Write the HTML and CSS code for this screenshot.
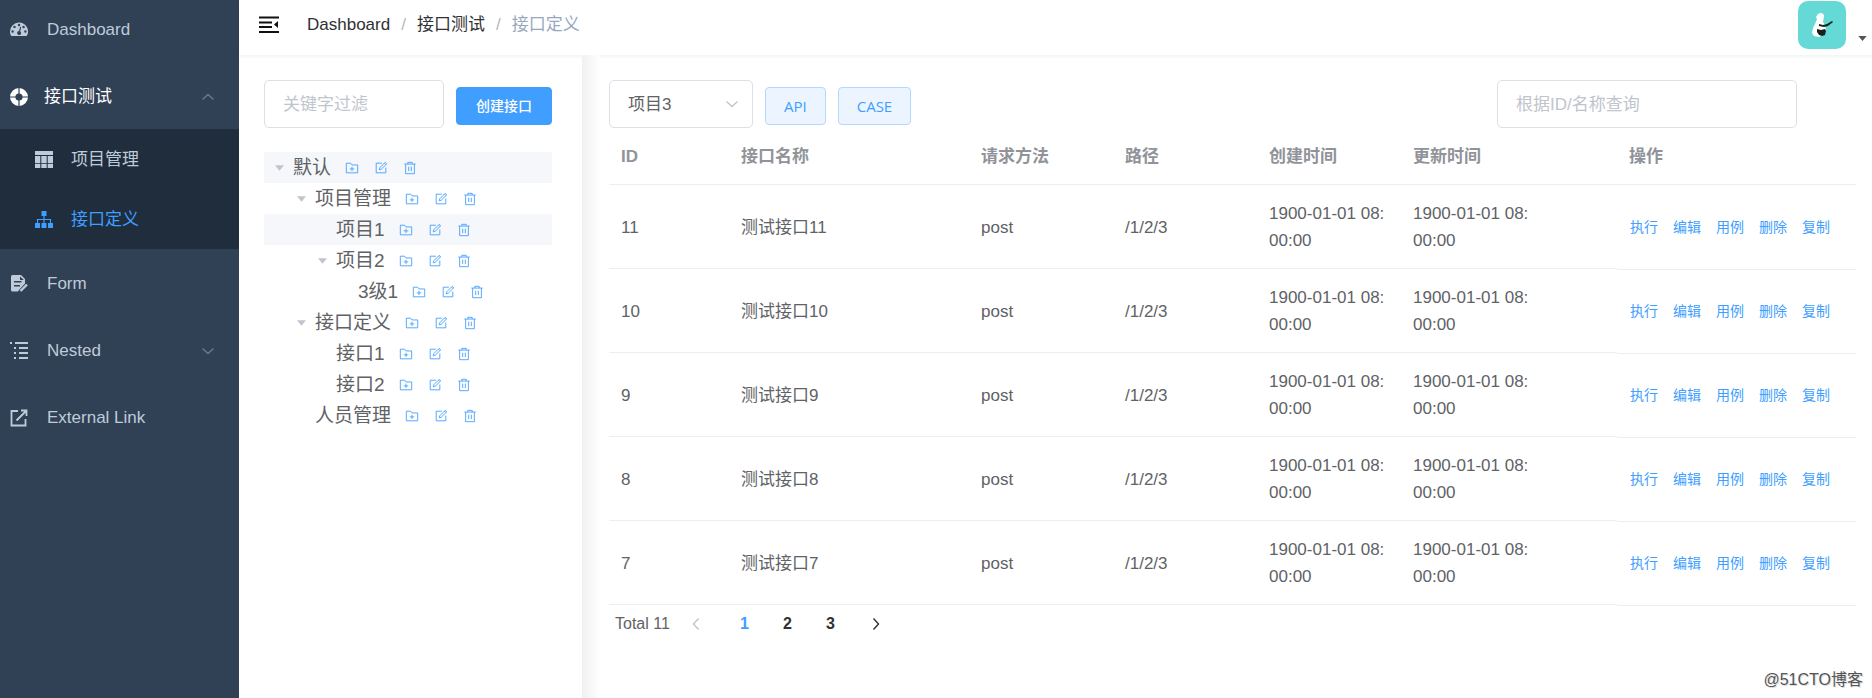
FILE: index.html
```html
<!DOCTYPE html>
<html lang="zh-CN">
<head>
<meta charset="utf-8">
<title>接口定义</title>
<link rel="stylesheet" href="styles.css">
</head>
<body>
<svg class="sprite" aria-hidden="true">
  <symbol id="folder-add" viewBox="0 0 16 16"><path d="M1.500 13.500v-11h5l1.500 2h6.500v9zM8 6.500v5M5.500 9h5" fill="none" stroke="currentColor"/></symbol>
  <symbol id="edit" viewBox="0 0 16 16"><path d="M9 2.500H2.500v11h11V7.500M6 10l.6-2.300L12.800 1.500l1.700 1.700L8.300 9.400zM12 2.500l1.500 1.500" fill="none" stroke="currentColor"/></symbol>
  <symbol id="trash" viewBox="0 0 16 16"><path d="M1.500 3.500h13M5.500 3.500v-2h5v2M3 3.500v11h10v-11M6.500 6.500v5M9.500 6.500v5" fill="none" stroke="currentColor"/></symbol>
  <symbol id="down" viewBox="0 0 14 14"><path d="M1.500 4.500l5.500 5 5.500-5" fill="none" stroke="currentColor" stroke-width="1.400"/></symbol>
  <symbol id="caret" viewBox="0 0 10 6"><path d="M0 0h10L5 6z" fill="currentColor"/></symbol>
</svg>
<div class="app">
  <nav class="sidebar" aria-label="主菜单">
    <ul class="menu">
      <li><a class="item" href="#"><svg class="icon" viewBox="0 0 18 18"><path fill="currentColor" fill-rule="evenodd" d="M9 1.500a9 9 0 0 0-9 9c0 1.700.5 3.300 1.300 4.600h15.400A9 9 0 0 0 9 1.500zM9 2.800a1.200 1.200 0 1 1 0 2.400 1.200 1.200 0 0 1 0-2.400zM4.500 4.700a1.200 1.200 0 1 1 0 2.400 1.200 1.200 0 0 1 0-2.400zM2.600 9.300a1.200 1.200 0 1 1 0 2.400 1.200 1.200 0 0 1 0-2.400zM15.400 9.300a1.200 1.200 0 1 1 0 2.400 1.200 1.200 0 0 1 0-2.400zM13.600 4.800a1.200 1.200 0 1 1 0 2.400 1.200 1.200 0 0 1 0-2.400zM10.200 5.800l1 .3-1 4.300a2 2 0 1 1-1.200-.3z"/></svg><span>Dashboard</span></a></li>
      <li>
        <a class="item open" href="#"><svg class="icon" viewBox="0 0 18 18"><circle cx="9" cy="9" r="6.300" fill="none" stroke="currentColor" stroke-width="5.400"/><path d="M9 0v6M9 12v6M0 9h6M12 9h6" stroke="#304156" stroke-width="1.200"/></svg><span>接口测试</span><svg class="arrow up"><use href="#down"/></svg></a>
        <ul class="submenu">
          <li><a class="item" href="#"><svg class="icon" viewBox="0 0 18 18"><path fill="currentColor" d="M0 0h18v4H0zM0 5h5.300v7H0zM6.300 5h5.400v7H6.300zM12.700 5H18v7h-5.300zM0 12.700h5.300V17H0zM6.300 12.700h5.400V17H6.300zM12.700 12.700H18V17h-5.300z"/></svg><span>项目管理</span></a></li>
          <li><a class="item active" href="#"><svg class="icon" viewBox="0 0 18 18"><path fill="currentColor" d="M6.500 0h5v5h-5zM0 12h5v5H0zM6.500 12h5v5h-5zM13 12h5v5h-5z"/><path d="M9 5v7M2.500 12V8.500h13V12" fill="none" stroke="currentColor" stroke-width="1.200"/></svg><span>接口定义</span></a></li>
        </ul>
      </li>
      <li><a class="item" href="#"><svg class="icon" viewBox="0 0 18 18"><path fill="currentColor" fill-rule="evenodd" d="M2.500 0h8.500l4 4v4.500l-6 6.500-1 1.500H2.500a1.500 1.500 0 0 1-1.500-1.500v-13.500A1.500 1.500 0 0 1 2.500 0zM4 6v1.500h7.500V6zM4 10v1.500h6V10zM10 1.500V5h3.800z"/><path d="M10.500 16l6.500-6.500" fill="none" stroke="currentColor" stroke-width="2.400"/></svg><span>Form</span></a></li>
      <li><a class="item" href="#"><svg class="icon" viewBox="0 0 18 18"><path fill="currentColor" d="M0 0h2v2H0zM5 0h13v2H5zM4 5h2v2H4zM9 5h9v2H9zM4 10h2v2H4zM9 10h9v2H9zM4 15h2v2H4zM9 15h9v2H9z"/></svg><span>Nested</span><svg class="arrow"><use href="#down"/></svg></a></li>
      <li><a class="item" href="#"><svg class="icon" viewBox="0 0 18 18"><path d="M8 2H1.500v14.500h14V10M6.500 11.500L16 2M11 1.500h5.500V7" fill="none" stroke="currentColor" stroke-width="1.800"/></svg><span>External Link</span></a></li>
    </ul>
  </nav>
  <div class="page">
    <header class="navbar">
      <button class="hamburger" type="button" aria-label="折叠菜单"><svg viewBox="0 0 20 18"><path d="M0 1.500h20M0 6.500h13M0 11h13M0 16h20" stroke="#111" stroke-width="2"/><path d="M19 5v7l-4-3.500z" fill="#111"/></svg></button>
      <nav class="crumbs" aria-label="面包屑"><a href="#">Dashboard</a><i>/</i><a href="#">接口测试</a><i>/</i><span>接口定义</span></nav>
      <button class="user" type="button" aria-label="用户菜单">
        <svg class="avatar" viewBox="0 0 48 48"><rect width="48" height="48" rx="10" fill="#64d9d6"/><path fill="#fff" d="M20 13c2-2 6-1 6 2l-1 6 2 3 1 6-3 4-4 2-5-1-2-3 1-5 2-4 2-5-1-2z"/><path fill="#16201f" d="M19 28l4 1 4-1 1 2-1 4-3 1-3-1-2-3zM21 23l4 1 4-1 5-3 1 1-5 4-4 1-5-1z"/></svg>
        <svg class="user-caret"><use href="#caret"/></svg>
      </button>
    </header>
    <div class="content">
      <aside class="tree-panel">
        <div class="tools">
          <input class="field" type="text" placeholder="关键字过滤" aria-label="关键字过滤">
          <button class="btn primary" type="button">创建接口</button>
        </div>
        <ul class="tree">
          <li class="node d0 shaded"><svg class="caret"><use href="#caret"/></svg><span>默认</span><button type="button" aria-label="新增"><svg><use href="#folder-add"/></svg></button><button type="button" aria-label="编辑"><svg><use href="#edit"/></svg></button><button type="button" aria-label="删除"><svg><use href="#trash"/></svg></button></li>
          <li class="node d1"><svg class="caret"><use href="#caret"/></svg><span>项目管理</span><button type="button" aria-label="新增"><svg><use href="#folder-add"/></svg></button><button type="button" aria-label="编辑"><svg><use href="#edit"/></svg></button><button type="button" aria-label="删除"><svg><use href="#trash"/></svg></button></li>
          <li class="node d2 leaf shaded"><span>项目1</span><button type="button" aria-label="新增"><svg><use href="#folder-add"/></svg></button><button type="button" aria-label="编辑"><svg><use href="#edit"/></svg></button><button type="button" aria-label="删除"><svg><use href="#trash"/></svg></button></li>
          <li class="node d2"><svg class="caret"><use href="#caret"/></svg><span>项目2</span><button type="button" aria-label="新增"><svg><use href="#folder-add"/></svg></button><button type="button" aria-label="编辑"><svg><use href="#edit"/></svg></button><button type="button" aria-label="删除"><svg><use href="#trash"/></svg></button></li>
          <li class="node d3 leaf"><span>3级1</span><button type="button" aria-label="新增"><svg><use href="#folder-add"/></svg></button><button type="button" aria-label="编辑"><svg><use href="#edit"/></svg></button><button type="button" aria-label="删除"><svg><use href="#trash"/></svg></button></li>
          <li class="node d1"><svg class="caret"><use href="#caret"/></svg><span>接口定义</span><button type="button" aria-label="新增"><svg><use href="#folder-add"/></svg></button><button type="button" aria-label="编辑"><svg><use href="#edit"/></svg></button><button type="button" aria-label="删除"><svg><use href="#trash"/></svg></button></li>
          <li class="node d2 leaf"><span>接口1</span><button type="button" aria-label="新增"><svg><use href="#folder-add"/></svg></button><button type="button" aria-label="编辑"><svg><use href="#edit"/></svg></button><button type="button" aria-label="删除"><svg><use href="#trash"/></svg></button></li>
          <li class="node d2 leaf"><span>接口2</span><button type="button" aria-label="新增"><svg><use href="#folder-add"/></svg></button><button type="button" aria-label="编辑"><svg><use href="#edit"/></svg></button><button type="button" aria-label="删除"><svg><use href="#trash"/></svg></button></li>
          <li class="node d1 leaf"><span>人员管理</span><button type="button" aria-label="新增"><svg><use href="#folder-add"/></svg></button><button type="button" aria-label="编辑"><svg><use href="#edit"/></svg></button><button type="button" aria-label="删除"><svg><use href="#trash"/></svg></button></li>
        </ul>
      </aside>
      <div class="divider"></div>
      <main class="main">
        <div class="tools">
          <div class="select"><select class="field" aria-label="项目"><option>项目3</option></select><svg><use href="#down"/></svg></div>
          <button class="btn plain" type="button">API</button>
          <button class="btn plain" type="button">CASE</button>
          <input class="field search" type="text" placeholder="根据ID/名称查询" aria-label="根据ID/名称查询">
        </div>
        <table class="table">
          <colgroup><col class="c-id"><col class="c-name"><col class="c-mid"><col class="c-mid"><col class="c-mid"><col class="c-updated"><col></colgroup>
          <thead><tr><th>ID</th><th>接口名称</th><th>请求方法</th><th>路径</th><th>创建时间</th><th>更新时间</th><th>操作</th></tr></thead>
          <tbody>
            <tr><td>11</td><td>测试接口11</td><td>post</td><td>/1/2/3</td><td>1900-01-01 08:00:00</td><td class="updated">1900-01-01 08:00:00</td><td class="ops"><div><button type="button">执行</button><button type="button">编辑</button><button type="button">用例</button><button type="button">删除</button><button type="button">复制</button></div></td></tr>
            <tr><td>10</td><td>测试接口10</td><td>post</td><td>/1/2/3</td><td>1900-01-01 08:00:00</td><td class="updated">1900-01-01 08:00:00</td><td class="ops"><div><button type="button">执行</button><button type="button">编辑</button><button type="button">用例</button><button type="button">删除</button><button type="button">复制</button></div></td></tr>
            <tr><td>9</td><td>测试接口9</td><td>post</td><td>/1/2/3</td><td>1900-01-01 08:00:00</td><td class="updated">1900-01-01 08:00:00</td><td class="ops"><div><button type="button">执行</button><button type="button">编辑</button><button type="button">用例</button><button type="button">删除</button><button type="button">复制</button></div></td></tr>
            <tr><td>8</td><td>测试接口8</td><td>post</td><td>/1/2/3</td><td>1900-01-01 08:00:00</td><td class="updated">1900-01-01 08:00:00</td><td class="ops"><div><button type="button">执行</button><button type="button">编辑</button><button type="button">用例</button><button type="button">删除</button><button type="button">复制</button></div></td></tr>
            <tr><td>7</td><td>测试接口7</td><td>post</td><td>/1/2/3</td><td>1900-01-01 08:00:00</td><td class="updated">1900-01-01 08:00:00</td><td class="ops"><div><button type="button">执行</button><button type="button">编辑</button><button type="button">用例</button><button type="button">删除</button><button type="button">复制</button></div></td></tr>
          </tbody>
        </table>
        <div class="pager">
          <span>Total 11</span>
          <button class="prev" type="button" disabled aria-label="上一页"><svg><use href="#down"/></svg></button>
          <button class="current" type="button">1</button>
          <button type="button">2</button>
          <button type="button">3</button>
          <button class="next" type="button" aria-label="下一页"><svg><use href="#down"/></svg></button>
        </div>
      </main>
    </div>
  </div>
  <div class="watermark">@51CTO博客</div>
</div>
</body>
</html>
```
FILE: styles.css
```css
* { box-sizing: border-box; }
body {
  margin: 0;
  font: 17px/24px "Liberation Sans", "Noto Sans CJK SC", sans-serif;
  color: #606266;
  background: #fff;
}
button, input, select { font: inherit; color: inherit; }
button { border: 0; padding: 0; background: none; cursor: pointer; }
a { color: inherit; text-decoration: none; }
ul { list-style: none; margin: 0; padding: 0; }
svg { display: block; flex: none; }
.sprite { position: absolute; width: 0; height: 0; }

.app { position: relative; display: flex; min-height: 100vh; overflow: hidden; }

/* Sidebar */
.sidebar { flex: none; width: 239px; background: #304156; }
.menu { margin-top: -5px; }
.item {
  display: flex;
  align-items: center;
  gap: 19px;
  height: 67px;
  padding: 2px 24px 0 10px;
  color: #bfcbd9;
}
.icon { width: 18px; height: 18px; }
.open { gap: 16px; color: #fff; }
.submenu { background: #1f2d3d; }
.submenu .item { gap: 18px; height: 60px; padding-left: 35px; }
.item.active { color: #409eff; }
.arrow { width: 14px; height: 14px; margin-left: auto; color: #6b7a8d; }
.up { transform: rotate(180deg); }

/* Top bar */
.page { flex: 1; display: flex; flex-direction: column; min-width: 0; }
.navbar {
  display: flex;
  align-items: center;
  height: 55px;
  padding: 0 5px 6px 20px;
  box-shadow: 0 1px 4px rgba(0, 21, 41, .08);
}
.hamburger svg { width: 20px; height: 18px; }
.crumbs { display: flex; margin-left: 28px; color: #303133; }
.crumbs i { margin: 0 11px; font-style: normal; color: #b4b8c0; }
.crumbs span { color: #97a8be; }
.user { display: flex; align-items: flex-end; gap: 12px; margin-left: auto; }
.avatar { width: 48px; height: 48px; }
.user-caret { width: 9px; height: 5px; margin-bottom: 8px; color: #555; }

/* Shared controls */
.content { flex: 1; display: flex; }
.tools { display: flex; align-items: center; gap: 12px; }
.field {
  width: 180px;
  height: 48px;
  padding: 2px 18px 0;
  border: 1px solid #dcdfe6;
  border-radius: 5px;
  background: #fff;
}
.field::placeholder { color: #c0c4cc; opacity: 1; }
.btn {
  height: 38px;
  margin-top: 4px;
  padding: 0 18px;
  border: 1px solid #409eff;
  border-radius: 4px;
  font-size: 14px;
}
.primary { flex: 1; background: #409eff; color: #fff; font-weight: 500; }
.plain {
  border-color: #b3d8ff;
  background: #ecf5ff;
  color: #409eff;
  font-family: "Open Sans", "Noto Sans CJK SC", sans-serif;
  font-size: 15px;
}

/* Tree */
.tree-panel { flex: none; width: 343px; padding: 25px 30px 0 25px; }
.tree { margin-top: 24px; }
.node { display: flex; align-items: center; height: 31px; font-size: 19px; }
.shaded { background: #f5f7fa; }
.d0 { padding-left: 11px; }
.d1 { padding-left: 33px; }
.d2 { padding-left: 54px; }
.d3 { padding-left: 76px; }
.caret { width: 9px; height: 6px; margin-right: 9px; color: #c0c4cc; }
.leaf > span { margin-left: 18px; }
.node button { margin-left: 15px; color: #409eff; }
.node span + button { margin-left: 14px; }
.node button svg { width: 14px; height: 14px; }

.divider { flex: none; width: 18px; background: linear-gradient(90deg, #f0f0f0, #f7f7f7 45%, #fff); }

/* Main panel */
.main { flex: 1; min-width: 0; padding: 25px 16px 0 9px; }
.select { position: relative; }
.select .field { display: block; width: 144px; appearance: none; }
.select svg {
  position: absolute;
  top: 17px;
  right: 14px;
  width: 14px;
  height: 14px;
  color: #c0c4cc;
  pointer-events: none;
}
.search { width: 300px; margin: 0 59px 0 auto; }

.table { width: 100%; table-layout: fixed; border-collapse: separate; border-spacing: 0; }
.c-id { width: 120px; }
.c-name { width: 240px; }
.c-mid { width: 144px; }
.c-updated { width: 216px; }
.table th, .table td {
  padding: 15px 12px 14px;
  border-bottom: 1px solid #ebeef5;
  text-align: left;
  line-height: 27px;
  word-break: break-all;
}
.table th { color: #909399; }
.table .updated { padding-right: 84px; }
.table .ops { padding-left: 13px; border-bottom-color: transparent; box-shadow: 0 1px 0 #ebeef5; }
.ops div { display: flex; gap: 15px; }
.ops button { font-size: 14px; line-height: 20px; color: #409eff; white-space: nowrap; }

.pager { display: flex; align-items: center; padding: 2px 6px; font-size: 16px; }
.pager button { width: 43px; height: 34px; font-weight: 700; color: #303133; }
.pager .current { color: #409eff; }
.pager svg { width: 14px; height: 14px; margin: auto; }
.pager .prev { width: 53px; color: #c0c4cc; }
.pager .next { width: 48px; }
.prev svg { transform: rotate(90deg); }
.next svg { transform: rotate(-90deg); }

.watermark {
  position: absolute;
  right: 9px;
  bottom: 6px;
  font-size: 16px;
  color: #555;
  text-shadow: 1px 1px 0 #ddd;
}
```
